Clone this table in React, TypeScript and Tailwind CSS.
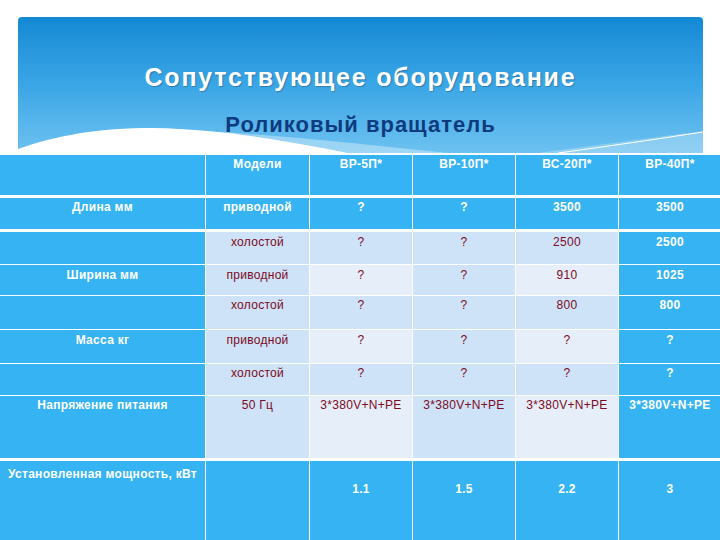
import React from "react";

type Tone = "blue" | "dark" | "light";

interface Cell {
  text: string;
  tone: Tone;
}

const COLS = ["w-[205px]", "w-[103px]", "w-[102px]", "w-[102px]", "w-[102px]", "w-[102px]"];

const toneClass: Record<Tone, string> = {
  blue: "bg-[#35b3f3] text-white font-bold",
  dark: "bg-[#cfe3f8] text-[#7b0a22]",
  light: "bg-[#e6eff9] text-[#7b0a22]",
};

// rows: height, gap above, top padding for col1 / other cols, cells
const rows: { h: string; mt: string; pt: string; pt2?: string; cells: Cell[] }[] = [
  {
    h: "h-[40px]",
    mt: "mt-0",
    pt: "pt-[2px]",
    cells: [
      { text: "", tone: "blue" },
      { text: "Модели", tone: "blue" },
      { text: "ВР-5П*", tone: "blue" },
      { text: "ВР-10П*", tone: "blue" },
      { text: "ВС-20П*", tone: "blue" },
      { text: "ВР-40П*", tone: "blue" },
    ],
  },
  {
    h: "h-[31px]",
    mt: "mt-[3px]",
    pt: "pt-[2px]",
    cells: [
      { text: "Длина  мм", tone: "blue" },
      { text: "приводной", tone: "blue" },
      { text: "?", tone: "blue" },
      { text: "?", tone: "blue" },
      { text: "3500", tone: "blue" },
      { text: "3500", tone: "blue" },
    ],
  },
  {
    h: "h-[32px]",
    mt: "mt-[3px]",
    pt: "pt-[3px]",
    cells: [
      { text: "", tone: "blue" },
      { text: "холостой", tone: "dark" },
      { text: "?", tone: "dark" },
      { text: "?", tone: "dark" },
      { text: "2500", tone: "dark" },
      { text: "2500", tone: "blue" },
    ],
  },
  {
    h: "h-[30px]",
    mt: "mt-px",
    pt: "pt-[3px]",
    cells: [
      { text: "Ширина мм", tone: "blue" },
      { text: "приводной", tone: "dark" },
      { text: "?", tone: "light" },
      { text: "?", tone: "dark" },
      { text: "910", tone: "light" },
      { text: "1025", tone: "blue" },
    ],
  },
  {
    h: "h-[33px]",
    mt: "mt-px",
    pt: "pt-[2px]",
    cells: [
      { text: "", tone: "blue" },
      { text: "холостой", tone: "dark" },
      { text: "?", tone: "dark" },
      { text: "?", tone: "dark" },
      { text: "800", tone: "dark" },
      { text: "800", tone: "blue" },
    ],
  },
  {
    h: "h-[33px]",
    mt: "mt-px",
    pt: "pt-[3px]",
    cells: [
      { text: "Масса кг", tone: "blue" },
      { text: "приводной", tone: "dark" },
      { text: "?", tone: "light" },
      { text: "?", tone: "dark" },
      { text: "?", tone: "light" },
      { text: "?", tone: "blue" },
    ],
  },
  {
    h: "h-[31px]",
    mt: "mt-px",
    pt: "pt-[2px]",
    cells: [
      { text: "", tone: "blue" },
      { text: "холостой", tone: "dark" },
      { text: "?", tone: "dark" },
      { text: "?", tone: "dark" },
      { text: "?", tone: "dark" },
      { text: "?", tone: "blue" },
    ],
  },
  {
    h: "h-[62px]",
    mt: "mt-px",
    pt: "pt-[2px]",
    cells: [
      { text: "Напряжение питания", tone: "blue" },
      { text: "50 Гц", tone: "dark" },
      { text: "3*380V+N+PE", tone: "light" },
      { text: "3*380V+N+PE", tone: "dark" },
      { text: "3*380V+N+PE", tone: "light" },
      { text: "3*380V+N+PE", tone: "blue" },
    ],
  },
  {
    h: "h-[79px]",
    mt: "mt-[3px]",
    pt: "pt-[6px]",
    pt2: "pt-[21px]",
    cells: [
      { text: "Установленная мощность,  кВт", tone: "blue" },
      { text: "", tone: "blue" },
      { text: "1.1", tone: "blue" },
      { text: "1.5", tone: "blue" },
      { text: "2.2", tone: "blue" },
      { text: "3", tone: "blue" },
    ],
  },
];

function Wave() {
  return (
    <svg
      className="absolute left-0 bottom-0"
      width="685"
      height="40"
      viewBox="0 0 685 40"
      fill="none"
    >
      <path
        d="M130 16 C230 18 330 30 430 40 L330 40 C260 30 200 22 130 16 Z"
        fill="white"
        fillOpacity="0.35"
      />
      <path
        d="M0 36 C40 22 80 15 135 15 C200 16 260 26 330 40 L0 40 Z"
        fill="white"
      />
      <path d="M520 40 C580 32 640 24 685 18 L685 40 Z" fill="white" fillOpacity="0.25" />
      <path d="M540 40 C600 32 640 26 685 19" stroke="white" strokeWidth="1.2" />
    </svg>
  );
}

export default function App() {
  return (
    <div className="w-[720px] h-[540px] overflow-hidden bg-white font-['Liberation_Sans',Arial,sans-serif]">
      {/* Title block */}
      <div className="pt-[17px] pl-[18px]">
        <div className="relative w-[685px] h-[136px] rounded-t-[4px] bg-gradient-to-b from-[#1289d4] via-[#3aa6e6] to-[#6cc1f0] overflow-hidden">
          <div className="pt-[45px] text-center text-[25px] leading-[30px] font-bold tracking-[1.8px] text-white [text-shadow:1px_1px_1px_rgba(0,0,0,0.25)]">
            Сопутствующее оборудование
          </div>
          <div className="pt-[20px] text-center text-[22px] leading-[26px] font-bold tracking-[1px] text-[#0d3b7d]">
            Роликовый вращатель
          </div>
          <Wave />
        </div>
      </div>

      {/* Table */}
      <div className="mt-[2px] bg-white">
        {rows.map((row, ri) => (
          <div key={ri} className={`flex gap-px ${row.h} ${row.mt}`}>
            {row.cells.map((c, ci) => (
              <div
                key={ci}
                className={`${COLS[ci]} shrink-0 text-center text-[12px] leading-[14px] tracking-[0.3px] ${toneClass[c.tone]} ${
                  ci === 0 ? row.pt : row.pt2 ?? row.pt
                } ${c.text === "?" && c.tone !== "blue" ? "text-[#5e2a63]" : ""}`}
              >
                {c.text}
              </div>
            ))}
          </div>
        ))}
      </div>
    </div>
  );
}
